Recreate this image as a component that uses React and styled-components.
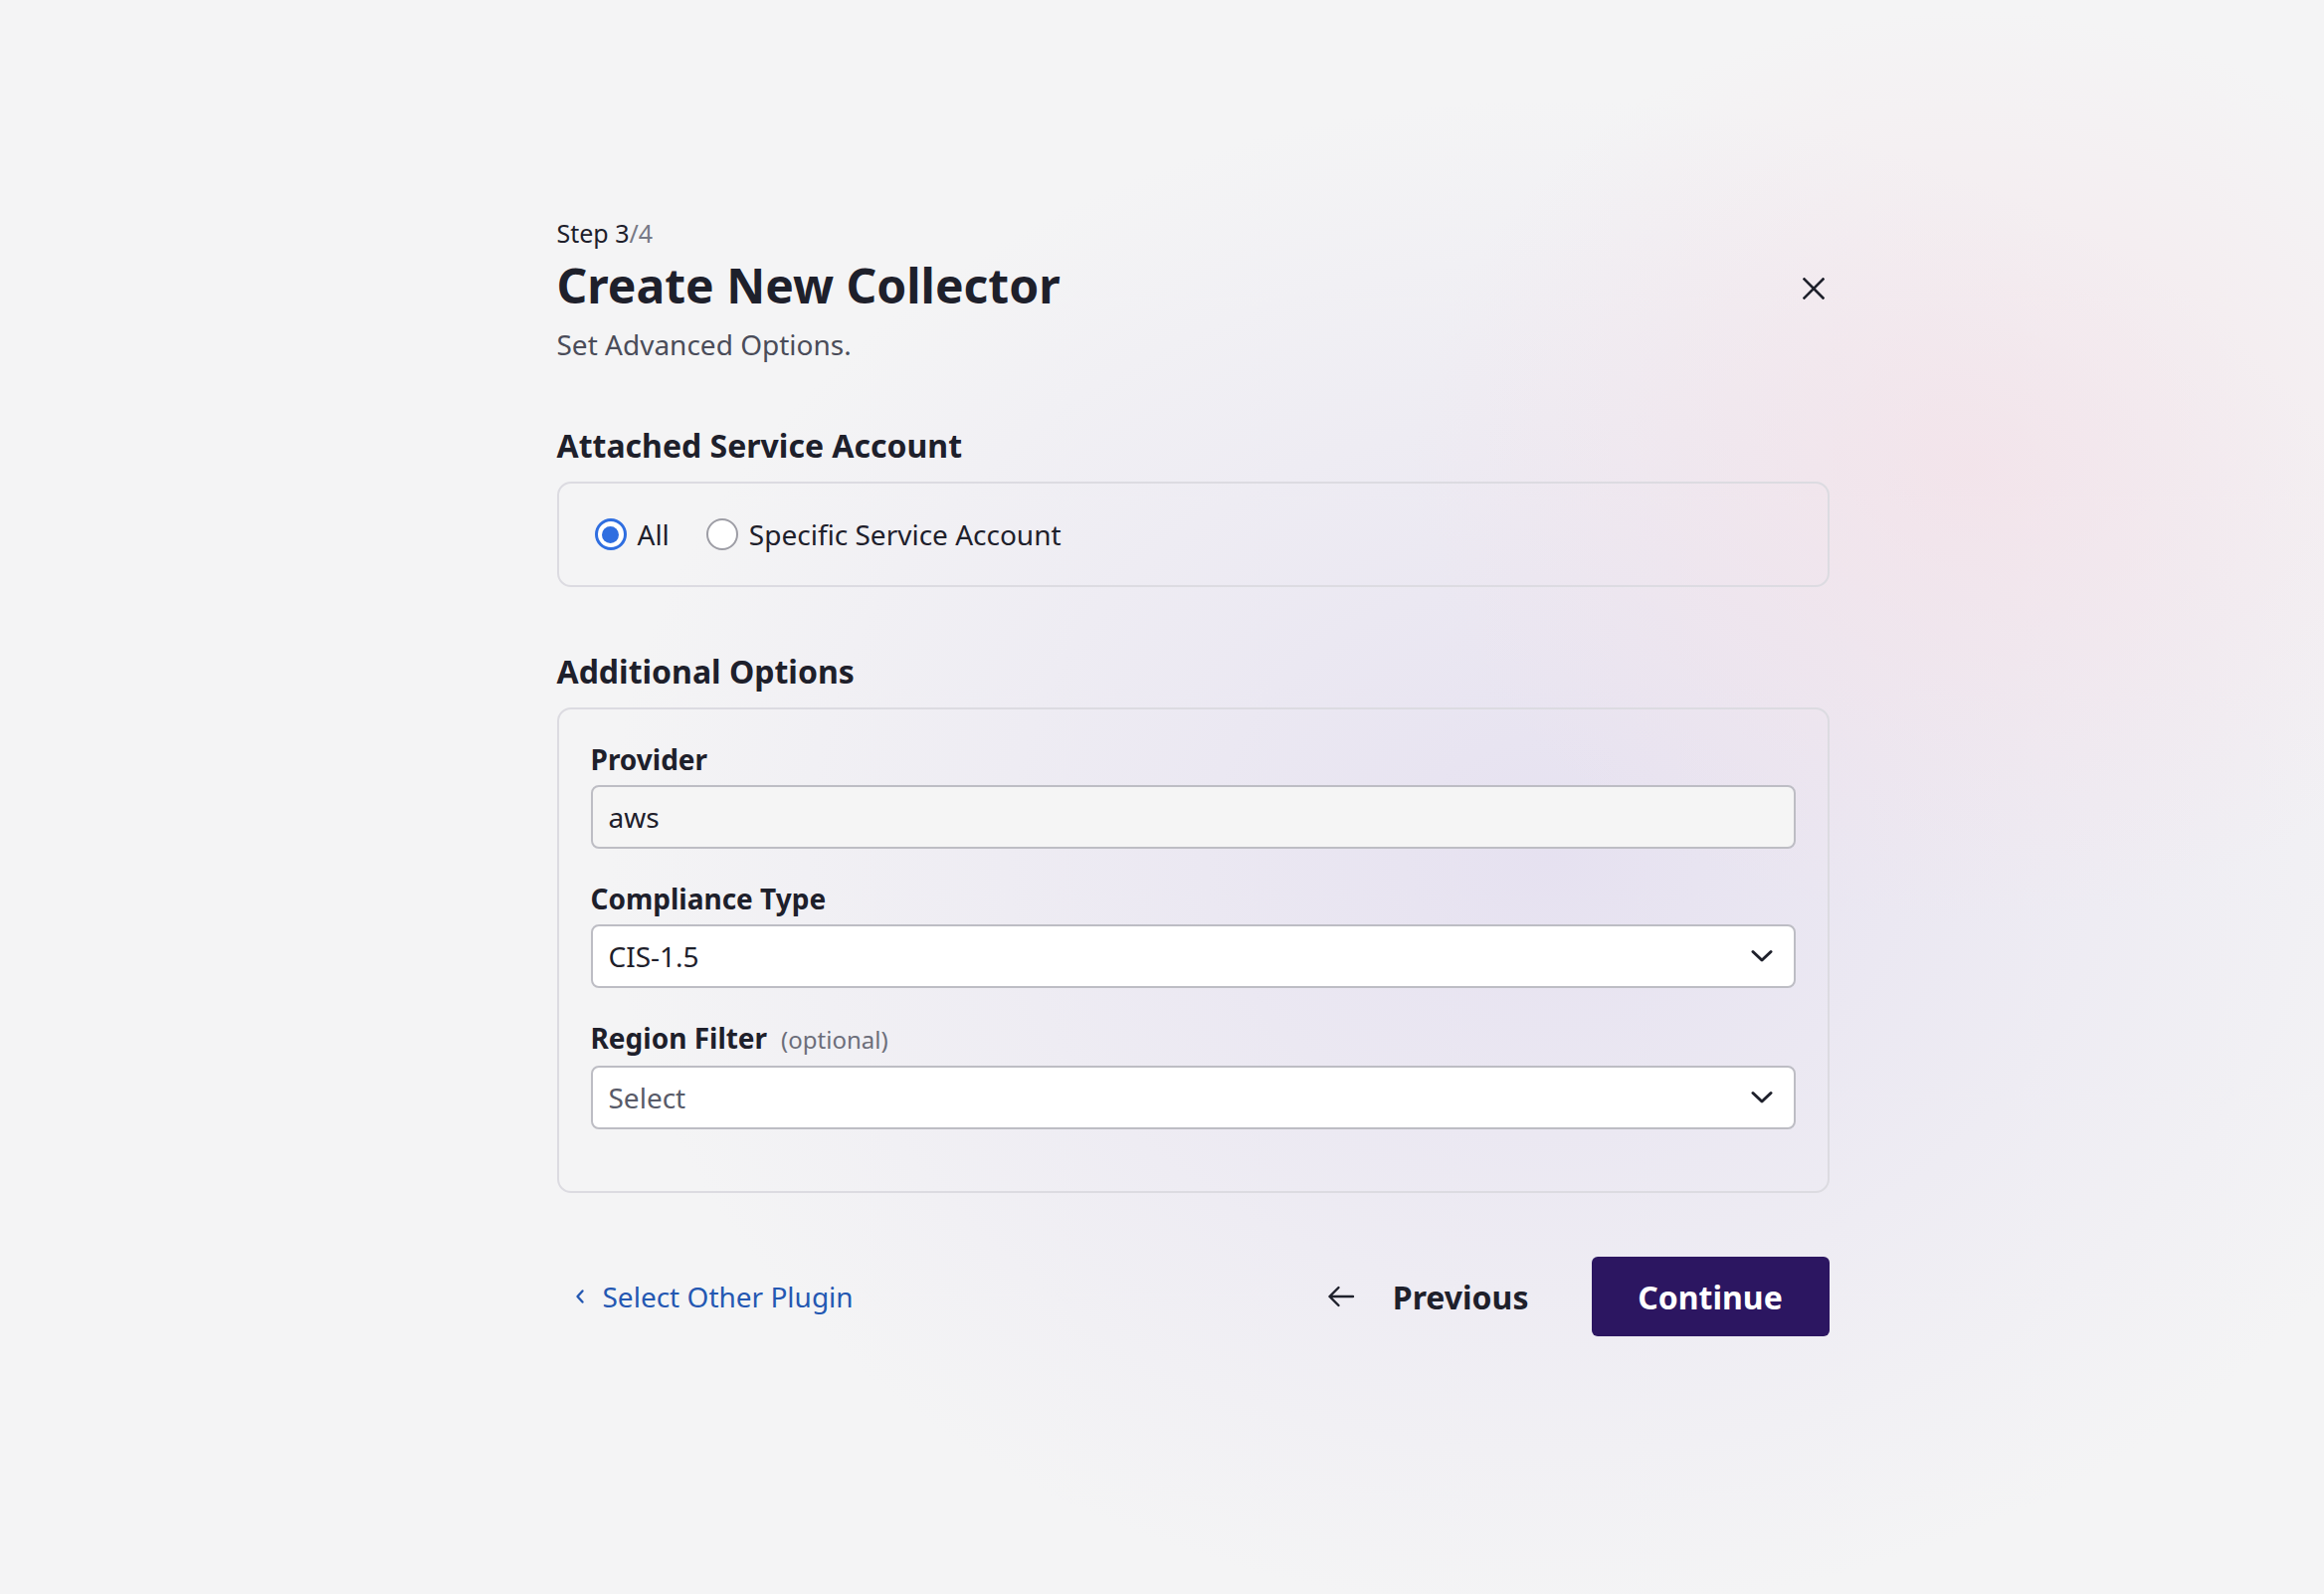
import React from "react";
import styled, { createGlobalStyle } from "styled-components";

const Global = createGlobalStyle`
  html, body { margin: 0; padding: 0; }
  body {
    font-family: "Noto Sans", "Open Sans", sans-serif;
    color: #1e202b;
    background: #f4f4f5;
  }
  * { box-sizing: border-box; }
`;

const Page = styled.div`
  min-height: 1602px;
  width: 100%;
  display: flex;
  justify-content: center;
  padding: 218px 0 0 62px;
  background:
    radial-gradient(ellipse 560px 460px at 1980px 470px, rgba(244, 224, 231, 0.7), rgba(244, 224, 231, 0) 100%),
    radial-gradient(ellipse 950px 760px at 1560px 860px, rgba(229, 224, 240, 0.95), rgba(229, 224, 240, 0) 100%),
    linear-gradient(180deg, #f4f4f5 0%, #f4f4f5 100%);
`;

const Card = styled.div`
  width: 1279px;
  display: flex;
  flex-direction: column;
`;

const StepText = styled.div`
  font-size: 25px;
  line-height: 32px;
  color: #1e202b;
  span { color: #777985; }
`;

const TitleRow = styled.div`
  display: flex;
  align-items: center;
  justify-content: space-between;
  margin-top: 7px;
`;

const Title = styled.h1`
  margin: 0;
  font-size: 48px;
  line-height: 60px;
  font-weight: 700;
  color: #1e202b;
`;

const CloseButton = styled.button`
  width: 32px;
  height: 32px;
  margin-top: 5px;
  padding: 0;
  border: 0;
  background: transparent;
  display: flex;
  align-items: center;
  justify-content: center;
  color: #1e202b;
  cursor: pointer;
`;

const Subtitle = styled.p`
  margin: 9px 0 0;
  font-size: 28px;
  line-height: 40px;
  color: #4a4c59;
`;

const SectionTitle = styled.h2`
  margin: ${(p) => p.$top}px 0 14px;
  font-size: 32px;
  line-height: 44px;
  font-weight: 700;
  color: #1e202b;
`;

const Box = styled.div`
  border: 2px solid #dcdbe1;
  border-radius: 14px;
  padding: ${(p) => p.$pad};
`;

const RadioGroup = styled.div`
  display: flex;
  align-items: center;
  gap: 37px;
`;

const RadioLabel = styled.label`
  display: flex;
  align-items: center;
  gap: 11px;
  font-size: 28px;
  line-height: 40px;
  color: #1e202b;
  cursor: pointer;
`;

const RadioCircle = styled.span`
  width: 32px;
  height: 32px;
  border-radius: 50%;
  border: ${(p) => (p.$checked ? "3px solid #2f6ee0" : "2px solid #9d9da5")};
  background: #ffffff;
  display: flex;
  align-items: center;
  justify-content: center;
  &::after {
    content: "";
    width: 17px;
    height: 17px;
    border-radius: 50%;
    background: ${(p) => (p.$checked ? "#2f6ee0" : "transparent")};
  }
`;

const Field = styled.div`
  display: flex;
  flex-direction: column;
  & + & { margin-top: 30px; }
`;

const Label = styled.div`
  font-size: 28px;
  line-height: 40px;
  font-weight: 700;
  color: #1e202b;
  margin-bottom: 6px;
  display: flex;
  align-items: baseline;
`;

const Optional = styled.span`
  font-size: 24px;
  font-weight: 400;
  color: #6c6e7a;
  margin-left: 14px;
`;

const Input = styled.div`
  height: 64px;
  border: 2px solid #bdbdc4;
  border-radius: 8px;
  background: ${(p) => (p.$disabled ? "#f5f5f5" : "#ffffff")};
  display: flex;
  align-items: center;
  justify-content: space-between;
  padding: 0 21px 0 16px;
  font-size: 28px;
  color: ${(p) => (p.$placeholder ? "#585b69" : "#1e202b")};
`;

const Footer = styled.div`
  margin-top: 64px;
  display: flex;
  align-items: center;
  justify-content: space-between;
`;

const BackLink = styled.button`
  border: 0;
  background: transparent;
  padding: 0 0 0 18px;
  display: flex;
  align-items: center;
  gap: 18px;
  font-family: inherit;
  font-size: 28px;
  line-height: 40px;
  color: #2458b2;
  cursor: pointer;
`;

const Actions = styled.div`
  display: flex;
  align-items: center;
  gap: 63px;
`;

const PrevButton = styled.button`
  border: 0;
  background: transparent;
  padding: 0;
  display: flex;
  align-items: center;
  gap: 38px;
  font-family: inherit;
  font-size: 32px;
  font-weight: 700;
  color: #1e202b;
  cursor: pointer;
`;

const PrimaryButton = styled.button`
  height: 80px;
  width: 239px;
  border: 0;
  border-radius: 6px;
  background: #2c1661;
  color: #ffffff;
  font-family: inherit;
  font-size: 32px;
  font-weight: 700;
  cursor: pointer;
`;

const Chevron = () => (
  <svg width="22" height="14" viewBox="0 0 22 14" fill="none">
    <path d="M2 2.5 L11 11 L20 2.5" stroke="#1e202b" strokeWidth="3" strokeLinecap="round" strokeLinejoin="round" />
  </svg>
);

const Radio = ({ checked, children }) => (
  <RadioLabel>
    <RadioCircle $checked={checked} />
    {children}
  </RadioLabel>
);

export default function App() {
  return (
    <>
      <Global />
      <Page>
        <Card>
          <StepText>
            Step 3<span>/4</span>
          </StepText>
          <TitleRow>
            <Title>Create New Collector</Title>
            <CloseButton aria-label="Close">
              <svg width="22" height="22" viewBox="0 0 22 22" fill="none">
                <path d="M1.5 1.5 L20.5 20.5 M20.5 1.5 L1.5 20.5" stroke="#1e202b" strokeWidth="2.6" strokeLinecap="square" />
              </svg>
            </CloseButton>
          </TitleRow>
          <Subtitle>Set Advanced Options.</Subtitle>

          <SectionTitle $top={60}>Attached Service Account</SectionTitle>
          <Box $pad="31px 36px">
            <RadioGroup>
              <Radio checked>All</Radio>
              <Radio>Specific Service Account</Radio>
            </RadioGroup>
          </Box>

          <SectionTitle $top={63}>Additional Options</SectionTitle>
          <Box $pad="30px 32px 62px">
            <Field>
              <Label>Provider</Label>
              <Input $disabled>aws</Input>
            </Field>
            <Field>
              <Label>Compliance Type</Label>
              <Input>
                CIS-1.5
                <Chevron />
              </Input>
            </Field>
            <Field>
              <Label>
                Region Filter<Optional>(optional)</Optional>
              </Label>
              <Input $placeholder>
                Select
                <Chevron />
              </Input>
            </Field>
          </Box>

          <Footer>
            <BackLink>
              <svg width="10" height="16" viewBox="0 0 10 16" fill="none">
                <path d="M7.5 2.5 L2.5 8 L7.5 13.5" stroke="#2458b2" strokeWidth="2.4" strokeLinecap="round" strokeLinejoin="round" />
              </svg>
              Select Other Plugin
            </BackLink>
            <Actions>
              <PrevButton>
                <svg width="28" height="22" viewBox="0 0 28 22" fill="none">
                  <path d="M26 11 H2.5 M11.5 2 L2.5 11 L11.5 20" stroke="#1e202b" strokeWidth="2.4" strokeLinecap="round" strokeLinejoin="round" />
                </svg>
                Previous
              </PrevButton>
              <PrimaryButton>Continue</PrimaryButton>
            </Actions>
          </Footer>
        </Card>
      </Page>
    </>
  );
}
